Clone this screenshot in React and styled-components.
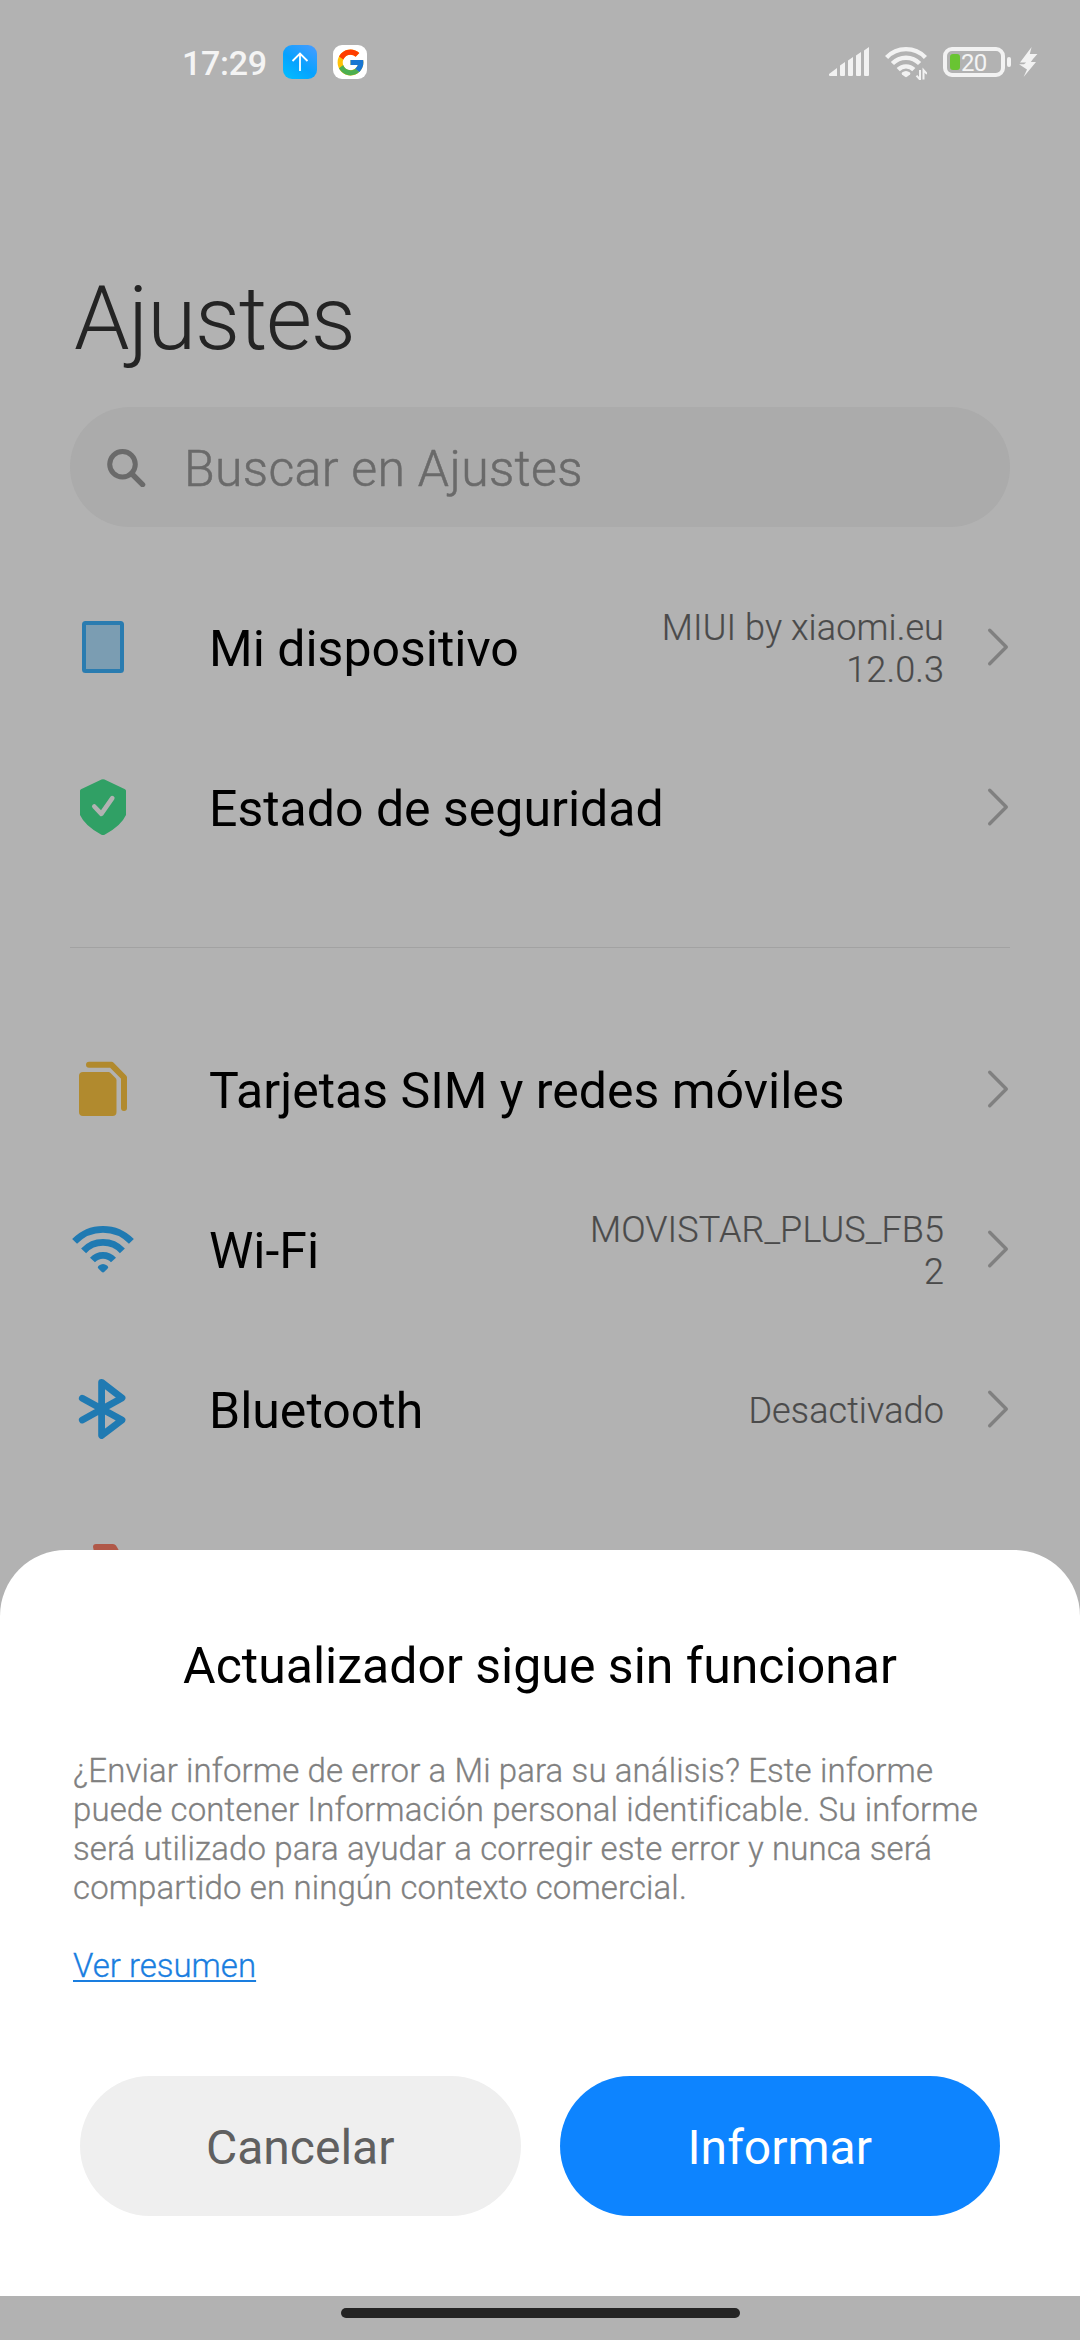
import React from 'react';
import styled, { createGlobalStyle } from 'styled-components';
import { FcGoogle } from 'react-icons/fc';

const GlobalStyle = createGlobalStyle`
    * {
        box-sizing: border-box;
    }

    body {
        margin: 0;
        background-color: #b2b2b2;
        font-family: Roboto, "Noto Sans", sans-serif;
    }
`;

const Screen = styled.div`
    position: relative;
    display: flex;
    flex-direction: column;
    width: 1080px;
    height: 2340px;
    overflow: hidden;
    background-color: #b2b2b2;
`;

const StatusBar = styled.header`
    display: flex;
    align-items: center;
    justify-content: space-between;
    height: 124px;
    padding: 0 42px 0 182px;
`;

const StatusLeft = styled.div`
    display: flex;
    align-items: center;
    gap: 16px;
`;

const Clock = styled.span`
    width: 85px;
    font-size: 34px;
    font-weight: 500;
    line-height: 40px;
    letter-spacing: -0.3px;
    padding-top: 2px;
    white-space: nowrap;
    color: #f4f4f4;
`;

const AppBadge = styled.div`
    display: flex;
    align-items: center;
    justify-content: center;
    width: 34px;
    height: 34px;
    border-radius: 9px;
    background: ${props => props.type === "update" ? "linear-gradient(35deg, #00c0ff 0%, #06a2ff 45%, #4a9bff 100%)" : "#fff"};
`;

const StatusRight = styled.div`
    display: flex;
    align-items: center;
    height: 36px;
`;

const StatusIcon = styled.svg`
    display: block;
    margin-left: ${props => props.$gap || 0}px;
`;

const Battery = styled.div`
    display: flex;
    align-items: center;
    width: 62px;
    height: 30px;
    margin-left: 16px;
    padding-left: 3px;
    border: 4px solid #f2f2f2;
    border-radius: 9px;
`;

const BatteryLevel = styled.div`
    width: 10px;
    height: 16px;
    border-radius: 3px;
    background-color: #69c432;
`;

const BatteryText = styled.span`
    margin-left: 1px;
    padding-top: 1px;
    font-size: 24px;
    line-height: 22px;
    letter-spacing: -0.8px;
    color: #f4f4f4;
`;

const BatteryTip = styled.div`
    width: 4px;
    height: 10px;
    margin-left: 2px;
    border-radius: 2px;
    background-color: #f2f2f2;
`;

const Main = styled.main`
    padding: 143px 70px 0;
`;

const Title = styled.h1`
    margin: 0 0 36px 4px;
    font-size: 89px;
    font-weight: 300;
    line-height: 104px;
    letter-spacing: -1.3px;
    color: #242424;
`;

const SearchBox = styled.div`
    display: flex;
    align-items: center;
    height: 120px;
    padding-left: 36px;
    border-radius: 60px;
    background-color: #ababab;
`;

const SearchText = styled.span`
    margin-left: 38px;
    padding-top: 3px;
    font-size: 50px;
    font-weight: 300;
    line-height: 60px;
    letter-spacing: 0.32px;
    color: #6a6a6a;
    -webkit-text-stroke: 0.5px #6a6a6a;
`;

const List = styled.div`
    padding-top: ${props => props.$top}px;
`;

const Row = styled.div`
    display: flex;
    align-items: center;
    height: 160px;
`;

const RowIcon = styled.svg`
    display: block;
    flex: none;
    width: 64px;
    height: 64px;
    margin-left: 1px;
`;

const RowLabel = styled.span`
    flex: 1;
    margin-left: 74px;
    padding-top: 3px;
    font-size: 50px;
    line-height: 60px;
    white-space: nowrap;
    color: #000;
`;

const RowValue = styled.span`
    width: 360px;
    padding-top: 4px;
    font-size: 36px;
    font-weight: 300;
    line-height: 42px;
    letter-spacing: 0.1px;
    text-align: right;
    white-space: pre-line;
    color: #4a4a4a;
    -webkit-text-stroke: 0.2px #4a4a4a;
`;

const Chevron = styled.svg`
    display: block;
    flex: none;
    margin-left: 40px;
`;

const Divider = styled.hr`
    height: 1px;
    margin: 60px 0 0;
    border: none;
    background-color: #a2a2a2;
`;

const Sheet = styled.section`
    position: absolute;
    left: 0;
    right: 0;
    bottom: 44px;
    display: flex;
    flex-direction: column;
    height: 746px;
    padding: 86px 73px 80px;
    border-radius: 66px 66px 0 0;
    background-color: #fff;
`;

const SheetTitle = styled.h2`
    margin: 0;
    font-size: 50px;
    font-weight: 400;
    line-height: 60px;
    text-align: center;
    color: #000;
`;

const SheetText = styled.p`
    margin: 55px 0 0;
    font-size: 33px;
    font-weight: 300;
    line-height: 39px;
    letter-spacing: 0.11px;
    white-space: pre-line;
    color: #808080;
    -webkit-text-stroke: 0.3px #808080;
`;

const SheetLink = styled.a`
    align-self: flex-start;
    margin-top: 39px;
    font-size: 33px;
    font-weight: 300;
    line-height: 39px;
    text-decoration: underline;
    text-decoration-thickness: 2px;
    text-underline-offset: 3px;
    cursor: pointer;
    color: #1a7ee0;
    -webkit-text-stroke: 0.3px #1a7ee0;
`;

const Actions = styled.div`
    display: flex;
    gap: 39px;
    margin: auto 7px 0;
`;

const Button = styled.button`
    flex: 1;
    height: 140px;
    padding: 2px 0 0;
    border: none;
    border-radius: 70px;
    font-family: inherit;
    font-size: 48px;
    cursor: pointer;
    background-color: ${props => props.$primary ? "#0d84ff" : "#efefef"};
    color: ${props => props.$primary ? "#fff" : "#606060"};
`;

const HomeBar = styled.div`
    width: 399px;
    height: 10px;
    margin: auto auto 22px;
    border-radius: 5px;
    background-color: #242424;
`;

const icons = {
    device: (
        <rect x="13" y="8" width="38" height="48" rx="1.5" fill="#7b9db2" stroke="#2a7cb0" strokeWidth="4" />
    ),
    security: (
        <>
            <path d="M30.5 4.6Q32 3.8 33.5 4.6L54 14.2Q55 14.7 55 15.8V40Q50 51 34 59.4Q32 60.4 30 59.4Q14 51 9 40V15.8Q9 14.7 10 14.2Z" fill="#30a065" />
            <path d="M23.3 31.5L30.3 38.8L41.3 23.2" fill="none" stroke="#b2b2b2" strokeWidth="4.6" strokeLinecap="round" strokeLinejoin="round" />
        </>
    ),
    sim: (
        <>
            <path d="M12 15H37.5Q38.5 15 39.3 15.8L44.5 21Q45.5 22 45.5 23.2V55Q45.5 59 41.5 59H12Q8 59 8 55V19Q8 15 12 15Z" fill="#b18a2e" />
            <path d="M18 7.8H40.5L53 20.5V51" fill="none" stroke="#b18a2e" strokeWidth="6" strokeLinecap="round" strokeLinejoin="round" />
        </>
    ),
    wifi: (
        <>
            <path d="M3.6 24.4A39.4 39.4 0 0 1 60.4 24.4M12.6 33.8A26.6 26.6 0 0 1 51.4 33.8M21.5 43A14.3 14.3 0 0 1 42.5 43" fill="none" stroke="#207ab2" strokeWidth="6.8" />
            <path d="M28 48.4Q32 45.4 36 48.4Q38 50 36.2 52L33.4 54.8Q32 56 30.6 54.8L27.8 52Q26 50 28 48.4Z" fill="#207ab2" />
        </>
    ),
    bluetooth: (
        <path d="M11.3 21.2L51 43L30.6 58.5V5.3L51 21L11.3 43" fill="none" stroke="#207ab2" strokeWidth="6.8" strokeLinecap="round" strokeLinejoin="round" />
    ),
    hotspot: (
        <path d="M25 7H42Q44 7 45 8.6L50 17H25Q22 13 22 10Q22 7 25 7Z" fill="#b05848" />
    ),
};

const deviceRows = [
    { icon: "device", label: "Mi dispositivo", value: "MIUI by xiaomi.eu\n12.0.3" },
    { icon: "security", label: "Estado de seguridad" },
];

const networkRows = [
    { icon: "sim", label: "Tarjetas SIM y redes móviles" },
    { icon: "wifi", label: "Wi-Fi", value: "MOVISTAR_PLUS_FB5\n2" },
    { icon: "bluetooth", label: "Bluetooth", value: "Desactivado" },
];

const SettingsRow = ({ icon, label, value }) => (
    <Row>
        <RowIcon viewBox="0 0 64 64">{icons[icon]}</RowIcon>
        <RowLabel>{label}</RowLabel>
        {value && <RowValue>{value}</RowValue>}
        <Chevron width="26" height="40" viewBox="0 0 26 40">
            <path d="M5.7 3.3L22.3 20L5.7 36.7" fill="none" stroke="#808080" strokeWidth="3.4" strokeLinecap="round" strokeLinejoin="round" />
        </Chevron>
    </Row>
);

const Status = () => (
    <StatusBar>
        <StatusLeft>
            <Clock>17:29</Clock>
            <AppBadge type="update">
                <svg width="34" height="34" viewBox="0 0 34 34">
                    <path d="M17 26V8.5M9.5 16L17 8.5L24.5 16" fill="none" stroke="#fff" strokeWidth="1.8" />
                </svg>
            </AppBadge>
            <AppBadge>
                <FcGoogle size={31} />
            </AppBadge>
        </StatusLeft>
        <StatusRight>
            <StatusIcon width="40" height="30" viewBox="0 0 40 30" fill="#f2f2f2">
                <path d="M0 27L8 21V29H1Q0 29 0 28ZM11 18.5L16 15V28Q16 29 15 29H12Q11 29 11 28ZM19 13.5L24 10V28Q24 29 23 29H20Q19 29 19 28ZM27 8.5L32 5V28Q32 29 31 29H28Q27 29 27 28ZM35 3.5L40 0V28Q40 29 39 29H36Q35 29 35 28Z" />
            </StatusIcon>
            <StatusIcon $gap={16} width="42" height="36" viewBox="0 0 42 36">
                <path d="M1.6 13.4A26.8 26.8 0 0 1 40.4 13.4M7.4 19.6A18.6 18.6 0 0 1 34.6 19.6M13.2 25.6A11 11 0 0 1 28.8 25.6" fill="none" stroke="#f2f2f2" strokeWidth="4.4" />
                <path d="M17 28.6Q21 25.6 25 28.6Q25.8 29.6 25 30.4L22 32.8Q21 33.5 20 32.8L17 30.4Q16.2 29.6 17 28.6Z" fill="#f2f2f2" />
                <path d="M35 26V35.5L31.5 31.6M38.5 35.5V26L42 29.9" fill="none" stroke="#f2f2f2" strokeWidth="2" />
            </StatusIcon>
            <Battery>
                <BatteryLevel />
                <BatteryText>20</BatteryText>
            </Battery>
            <BatteryTip />
            <StatusIcon $gap={8} width="19" height="30" viewBox="0 0 19 30">
                <path d="M12.6 0L1 15.5H7.2L5 17.3H0L8 22.5L4.6 30L17 15H11.8L14 12L18.4 7H10.8Z" fill="#f2f2f2" />
            </StatusIcon>
        </StatusRight>
    </StatusBar>
);

export default function App() {
    return (
        <>
            <GlobalStyle />
            <Screen>
                <Status />
                <Main>
                    <Title>Ajustes</Title>
                    <SearchBox>
                        <svg width="40" height="40" viewBox="0 0 40 40">
                            <circle cx="16.5" cy="17.3" r="12.8" fill="none" stroke="#6a6a6a" strokeWidth="5" />
                            <path d="M25.5 26.5L36.6 37.6" stroke="#6a6a6a" strokeWidth="5.4" strokeLinecap="round" />
                        </svg>
                        <SearchText>Buscar en Ajustes</SearchText>
                    </SearchBox>
                    <List $top={40}>
                        {deviceRows.map(row => <SettingsRow key={row.icon} {...row} />)}
                    </List>
                    <Divider />
                    <List $top={61}>
                        {networkRows.map(row => <SettingsRow key={row.icon} {...row} />)}
                        <Row>
                            <RowIcon viewBox="0 0 64 64">{icons.hotspot}</RowIcon>
                        </Row>
                    </List>
                </Main>
                <Sheet>
                    <SheetTitle>Actualizador sigue sin funcionar</SheetTitle>
                    <SheetText>
                        {"¿Enviar informe de error a Mi para su análisis? Este informe\npuede contener Información personal identificable. Su informe\nserá utilizado para ayudar a corregir este error y nunca será\ncompartido en ningún contexto comercial."}
                    </SheetText>
                    <SheetLink>Ver resumen</SheetLink>
                    <Actions>
                        <Button>Cancelar</Button>
                        <Button $primary>Informar</Button>
                    </Actions>
                </Sheet>
                <HomeBar />
            </Screen>
        </>
    );
}
